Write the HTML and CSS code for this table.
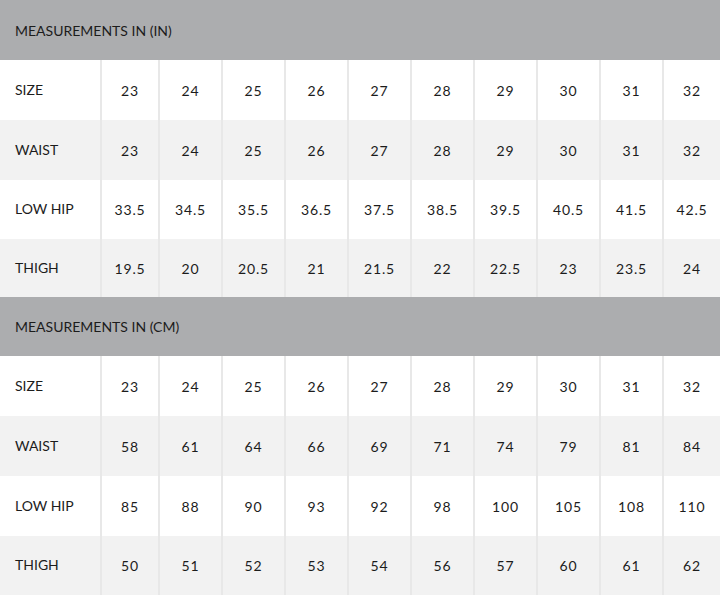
FILE: index.html
```html
<!DOCTYPE html>
<html>
<head>
<meta charset="utf-8">
<link rel="stylesheet" href="styles.css">
</head>
<body>
<div class="chart">
  <div class="section-head h1">MEASUREMENTS IN (IN)</div>
  <div class="row r1"><div class="label">SIZE</div><div class="cell">23</div><div class="cell">24</div><div class="cell">25</div><div class="cell">26</div><div class="cell">27</div><div class="cell">28</div><div class="cell">29</div><div class="cell">30</div><div class="cell">31</div><div class="cell">32</div></div>
  <div class="row r2 alt"><div class="label">WAIST</div><div class="cell">23</div><div class="cell">24</div><div class="cell">25</div><div class="cell">26</div><div class="cell">27</div><div class="cell">28</div><div class="cell">29</div><div class="cell">30</div><div class="cell">31</div><div class="cell">32</div></div>
  <div class="row r3"><div class="label">LOW HIP</div><div class="cell">33.5</div><div class="cell">34.5</div><div class="cell">35.5</div><div class="cell">36.5</div><div class="cell">37.5</div><div class="cell">38.5</div><div class="cell">39.5</div><div class="cell">40.5</div><div class="cell">41.5</div><div class="cell">42.5</div></div>
  <div class="row r4 alt"><div class="label">THIGH</div><div class="cell">19.5</div><div class="cell">20</div><div class="cell">20.5</div><div class="cell">21</div><div class="cell">21.5</div><div class="cell">22</div><div class="cell">22.5</div><div class="cell">23</div><div class="cell">23.5</div><div class="cell">24</div></div>
  <div class="section-head h2">MEASUREMENTS IN (CM)</div>
  <div class="row r5"><div class="label">SIZE</div><div class="cell">23</div><div class="cell">24</div><div class="cell">25</div><div class="cell">26</div><div class="cell">27</div><div class="cell">28</div><div class="cell">29</div><div class="cell">30</div><div class="cell">31</div><div class="cell">32</div></div>
  <div class="row r6 alt"><div class="label">WAIST</div><div class="cell">58</div><div class="cell">61</div><div class="cell">64</div><div class="cell">66</div><div class="cell">69</div><div class="cell">71</div><div class="cell">74</div><div class="cell">79</div><div class="cell">81</div><div class="cell">84</div></div>
  <div class="row r7"><div class="label">LOW HIP</div><div class="cell">85</div><div class="cell">88</div><div class="cell">90</div><div class="cell">93</div><div class="cell">92</div><div class="cell">98</div><div class="cell">100</div><div class="cell">105</div><div class="cell">108</div><div class="cell">110</div></div>
  <div class="row r8 alt"><div class="label">THIGH</div><div class="cell">50</div><div class="cell">51</div><div class="cell">52</div><div class="cell">53</div><div class="cell">54</div><div class="cell">56</div><div class="cell">57</div><div class="cell">60</div><div class="cell">61</div><div class="cell">62</div></div>
</div>
</body>
</html>
```
FILE: styles.css
```css
html, body {
  margin: 0;
  padding: 0;
  background: #ffffff;
}
body {
  font-family: Lato, "Noto Sans", sans-serif;
  color: #1c1c1c;
  font-size: 14px;
}
.chart {
  width: 720px;
  display: flex;
  flex-direction: column;
}
.section-head {
  background: #acadaf;
  display: flex;
  align-items: center;
  padding-left: 15px;
  font-size: 14px;
  letter-spacing: 0;
}
.h1 { height: 60px; }
.h2 { height: 59px; }
.row {
  display: grid;
  grid-template-columns: 100px 58px repeat(8, 63px) 58px;
  background: #ffffff;
}
.row.alt { background: #f2f2f2; }
.r1, .r2, .r5, .r6, .r7 { height: 60px; }
.r3, .r8 { height: 59px; }
.r4 { height: 58px; }
.label {
  display: flex;
  align-items: center;
  padding-left: 15px;
  padding-bottom: 2px;
  letter-spacing: 0;
}
.cell {
  display: flex;
  align-items: center;
  justify-content: center;
  border-left: 2px solid #e8e8e8;
  letter-spacing: 0.8px;
}
```
